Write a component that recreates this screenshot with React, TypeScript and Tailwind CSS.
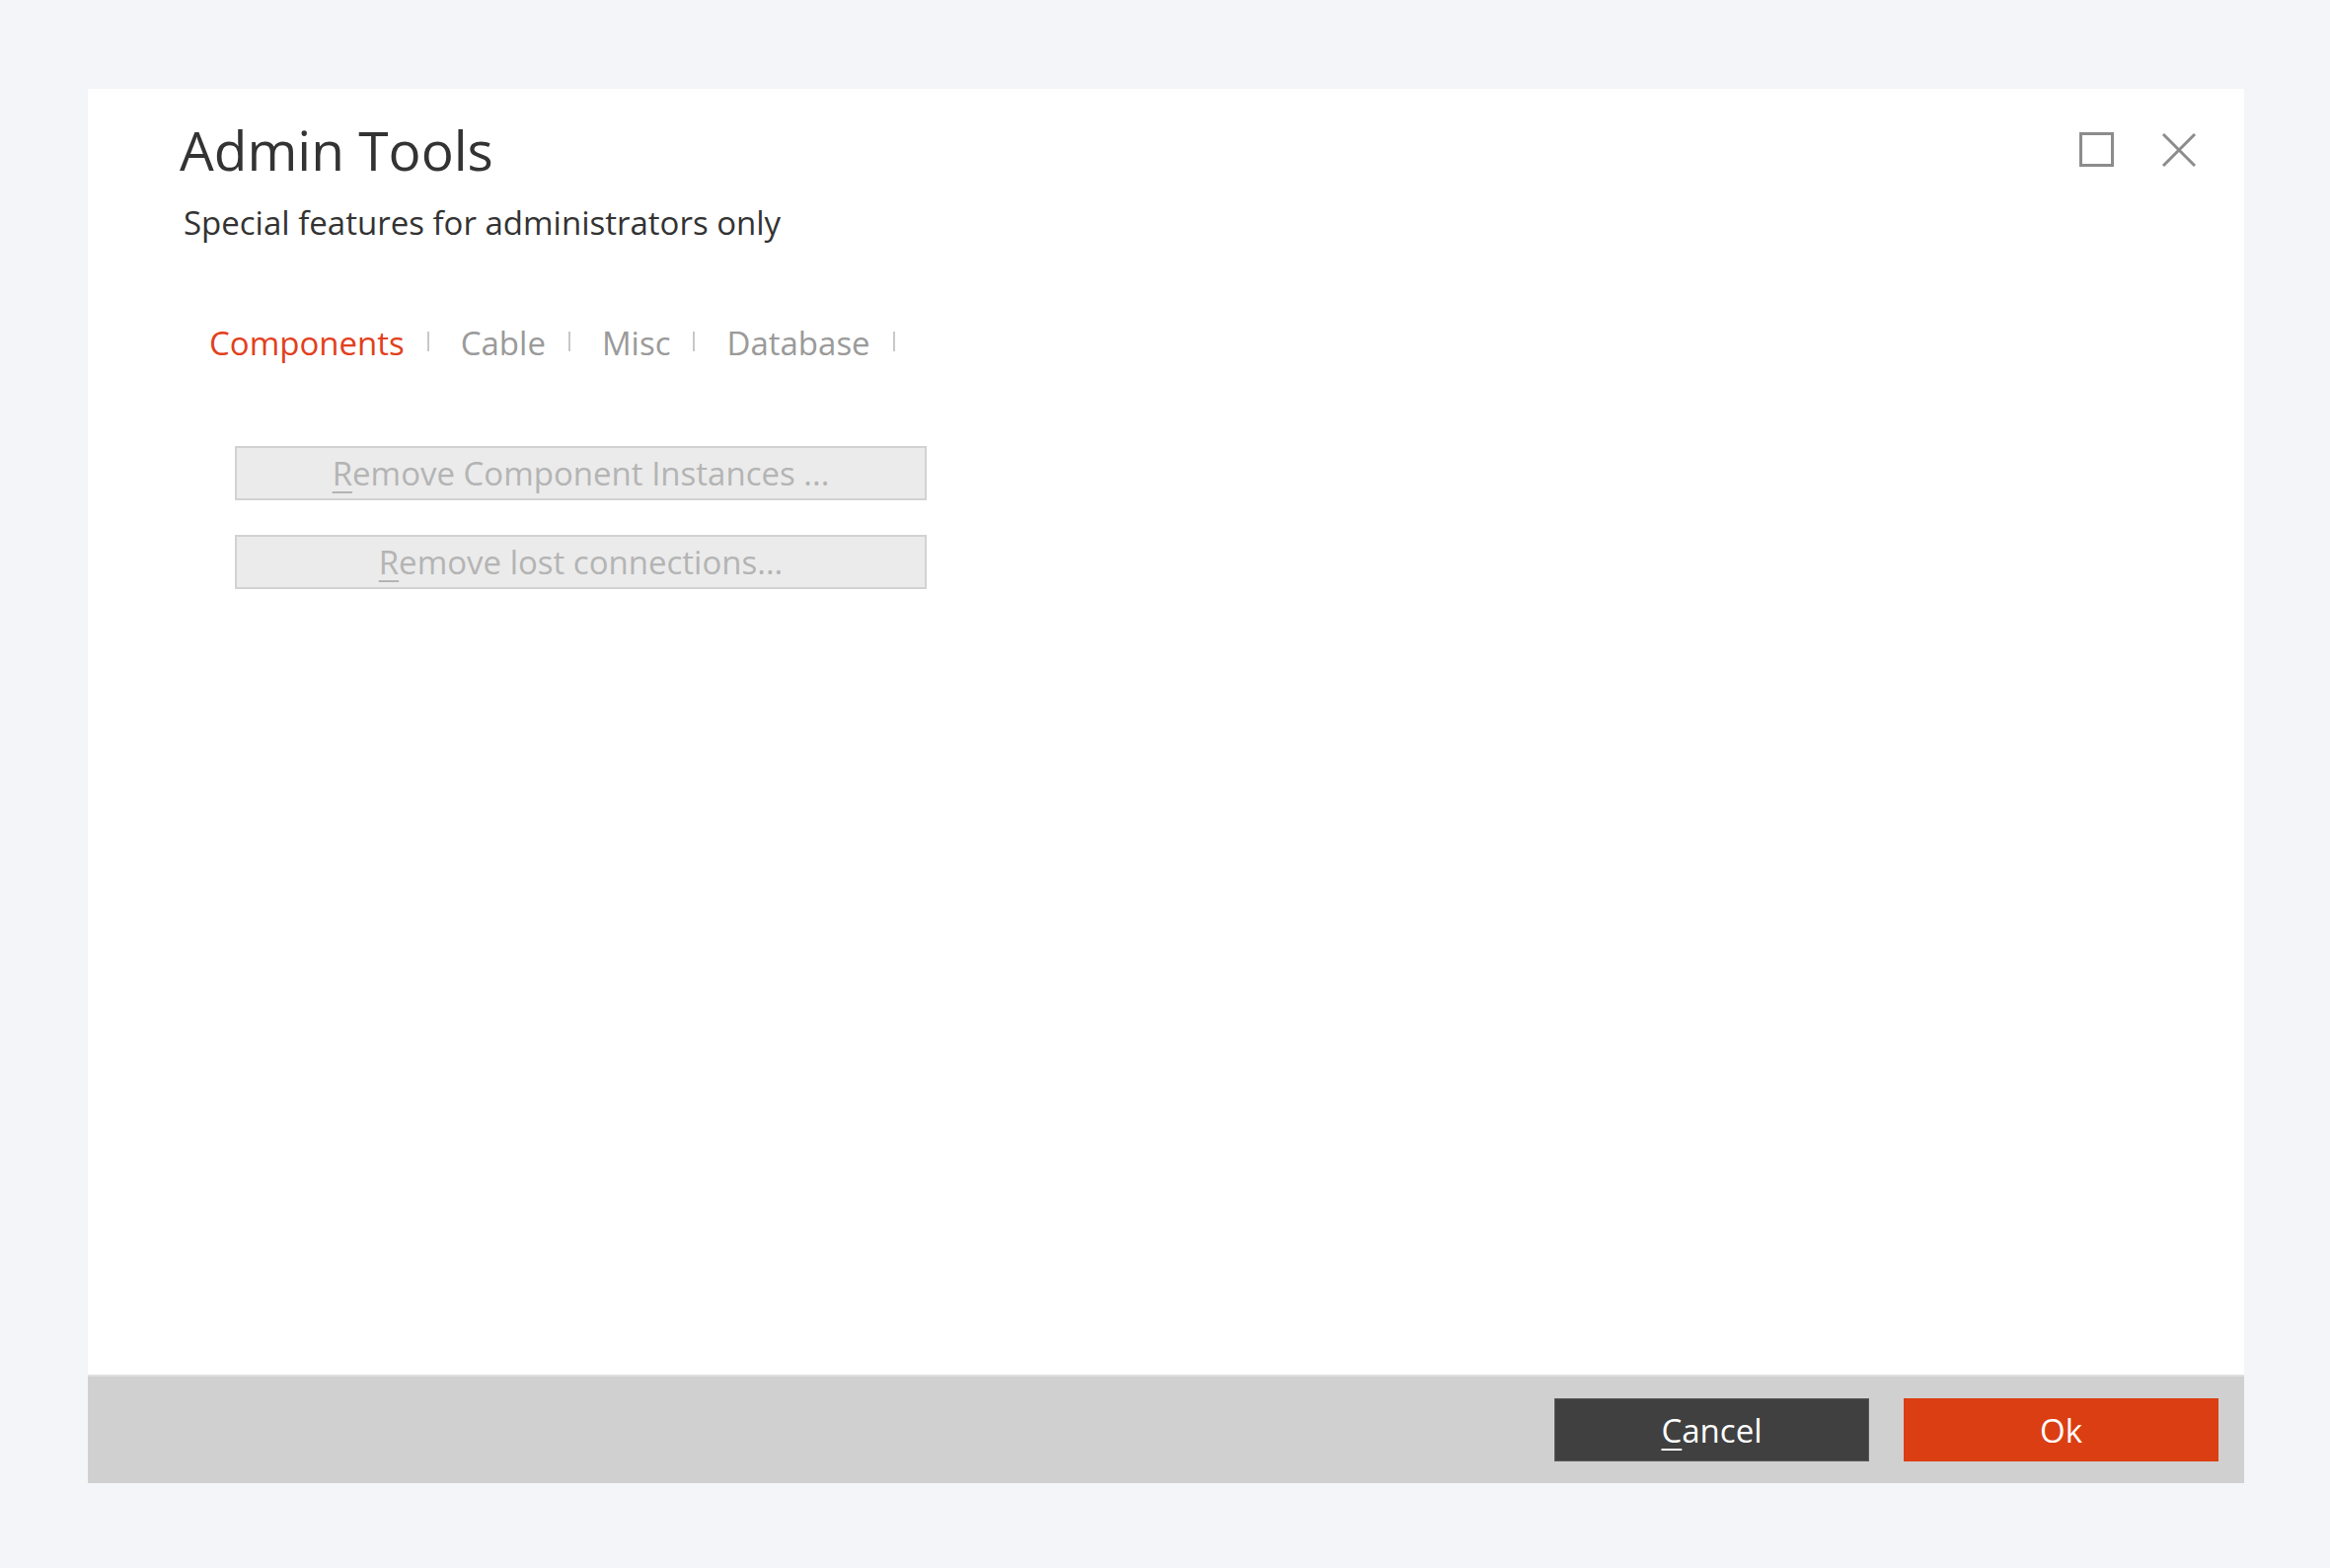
import React from "react";

const font = { fontFamily: '"Segoe UI", "Open Sans", "Noto Sans", sans-serif' };

const tabs = ["Components", "Cable", "Misc", "Database"];

function Underlined({ first, rest }: { first: string; rest: string }) {
  return (
    <>
      <span className="underline underline-offset-[6px] decoration-[2px]">{first}</span>
      {rest}
    </>
  );
}

function ActionButton({ first, rest }: { first: string; rest: string }) {
  return (
    <button className="w-[701px] h-[55px] bg-[#ebebeb] border-2 border-[#d2d2d2] text-[#b4b4b4] text-[33px] leading-none flex items-center justify-center">
      <Underlined first={first} rest={rest} />
    </button>
  );
}

export default function App() {
  return (
    <div
      className="w-[2361px] h-[1589px] bg-[#f4f5f9] pt-[90px] pl-[89px]"
      style={font}
    >
      <div className="w-[2185px] h-[1413px] bg-white flex flex-col">
        <div className="flex-1 flex flex-col pl-[93px] pr-[48px] pt-[34px]">
          <div className="flex justify-between items-center">
            <h1 className="text-[55px] leading-none text-[#333333]">Admin Tools</h1>
            <div className="flex items-center gap-[48px]">
              <div className="w-[35px] h-[35px] border-[3px] border-[#8c8c8c]" />
              <svg width="36" height="36" viewBox="0 0 36 36" className="text-[#8c8c8c]">
                <path
                  d="M2 2 L34 34 M34 2 L2 34"
                  stroke="currentColor"
                  strokeWidth="3"
                  fill="none"
                />
              </svg>
            </div>
          </div>

          <p className="text-[33px] leading-none text-[#333333] mt-[30px] pl-[4px]">
            Special features for administrators only
          </p>

          <div className="flex items-center mt-[89px] pl-[30px]">
            {tabs.map((t, i) => (
              <div key={t} className="flex items-center">
                <span
                  className={
                    "text-[33px] leading-none " +
                    (i === 0 ? "text-[#e2401c]" : "text-[#9a9a9a]")
                  }
                >
                  {t}
                </span>
                <span className="w-[2px] h-[20px] bg-[#c8c8c8] ml-[23px] mr-[32px] -mt-[4px]" />
              </div>
            ))}
          </div>

          <div className="flex flex-col gap-[35px] mt-[88px] pl-[56px]">
            <ActionButton first="R" rest="emove Component Instances ..." />
            <ActionButton first="R" rest="emove lost connections..." />
          </div>
        </div>

        <div className="h-[110px] bg-[#d0d0d0] border-t-2 border-[#e0e0e0] flex justify-end items-center gap-[35px] pr-[26px]">
          <button className="w-[319px] h-[64px] bg-[#404040] border border-[#5a5a5a] text-white text-[33px] leading-none flex items-center justify-center">
            <Underlined first="C" rest="ancel" />
          </button>
          <button className="w-[319px] h-[64px] bg-[#db3e12] text-white text-[33px] leading-none flex items-center justify-center">
            Ok
          </button>
        </div>
      </div>
    </div>
  );
}
